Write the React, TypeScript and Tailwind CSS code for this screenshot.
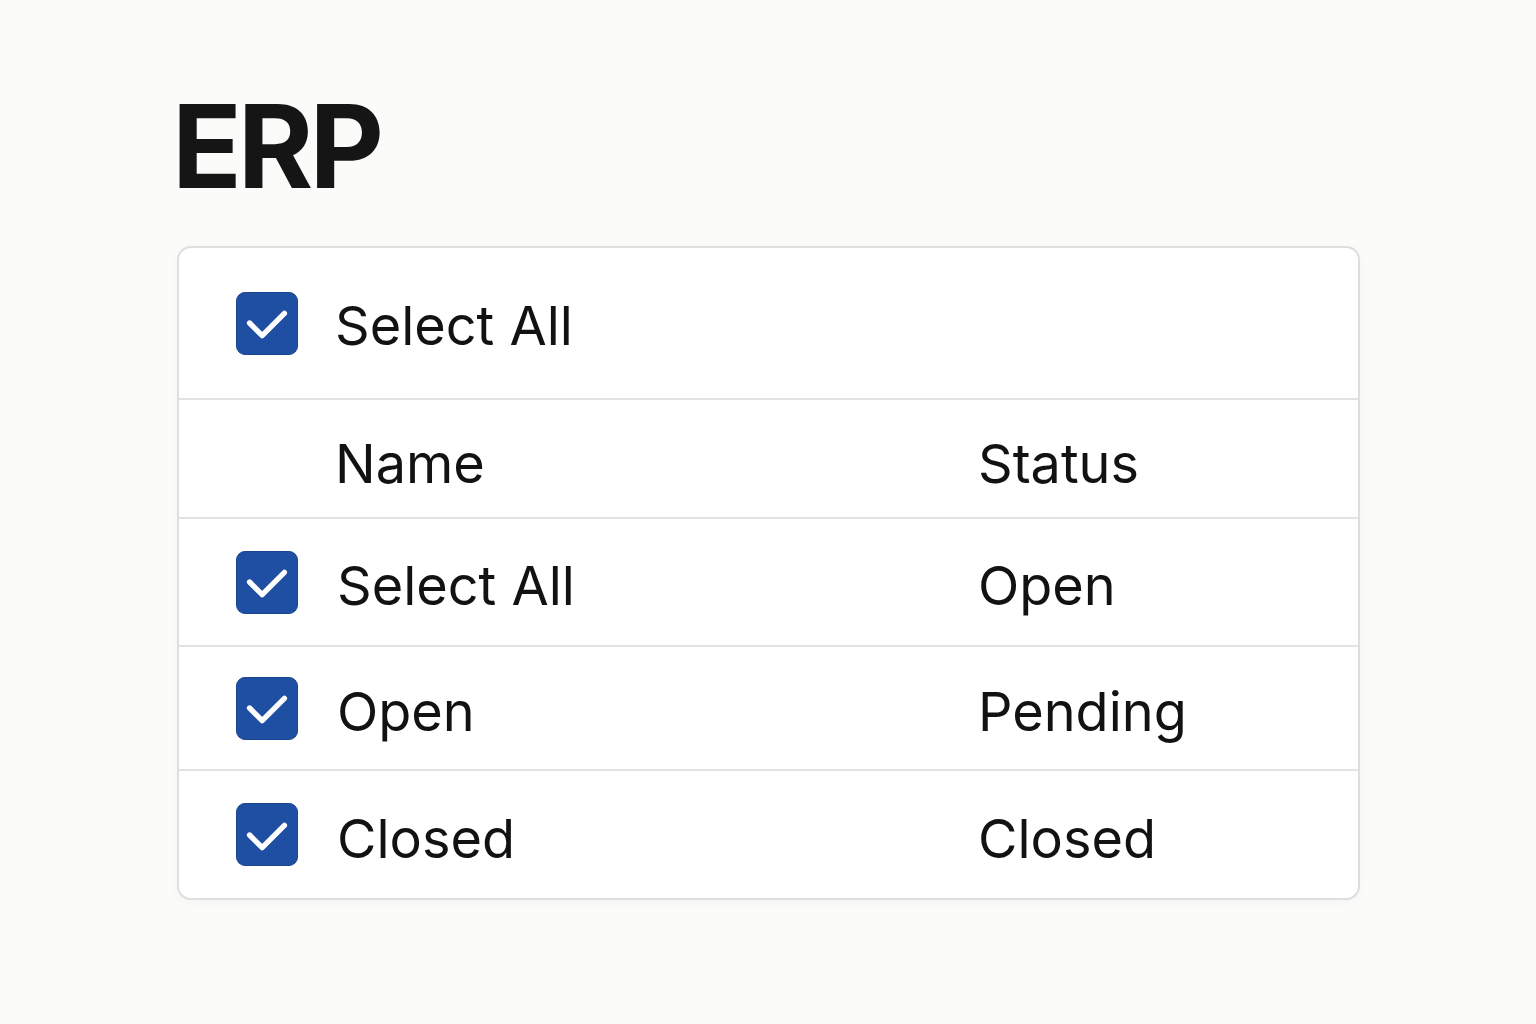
const rows = [
  { name: "Select All", status: "Open", h: "h-[128px]" },
  { name: "Open", status: "Pending", h: "h-[124px]" },
  { name: "Closed", status: "Closed", h: "h-[127px]" },
];

const Check = () => (
  <div className="w-[62px] h-[63px] shrink-0 rounded-[9px] bg-[#1f4fa2] border border-[#1a4591] flex items-center justify-center">
    <svg width="62" height="62" viewBox="0 0 62 62" fill="none">
      <path
        d="M13 31 L26 44 L49 21"
        stroke="white"
        strokeWidth="5.5"
        strokeLinecap="round"
        strokeLinejoin="round"
      />
    </svg>
  </div>
);

const App = () => {
  return (
    <main
      className="min-h-screen w-full bg-[#fbfbfa] pt-[89px] pb-[120px] text-[#121212]"
      style={{ fontFamily: "Inter, 'Noto Sans', sans-serif" }}
    >
      <div className="ml-[172px]">
        <h1 className="text-[115px] leading-none font-bold tracking-[-4px] text-[#151515]">
          ERP
        </h1>
      </div>

      <div className="ml-[177px] mt-[42px] w-[1183px] bg-white border-2 border-[#dedede] rounded-[14px] shadow-[0_2px_10px_rgba(0,0,0,0.03)] overflow-hidden">
        <div className="h-[152px] flex items-center pl-[57px] border-b-2 border-[#e3e3e3]">
          <Check />
          <span className="ml-[37px] pt-[6px] text-[54px] leading-none">Select All</span>
        </div>

        <div className="h-[119px] flex items-center pl-[156px] border-b-2 border-[#e3e3e3] text-[54px] leading-none pt-[10px]">
          <span className="w-[643px]">Name</span>
          <span>Status</span>
        </div>

        {rows.map((r, i) => (
          <div
            key={i}
            className={`${r.h} flex items-center pl-[57px] text-[54px] leading-none ${
              i < rows.length - 1 ? "border-b-2 border-[#e3e3e3]" : ""
            }`}
          >
            <Check />
            <span className="ml-[39px] w-[641px] pt-[8px]">{r.name}</span>
            <span className="pt-[8px]">{r.status}</span>
          </div>
        ))}
      </div>
    </main>
  );
};

export default App;
